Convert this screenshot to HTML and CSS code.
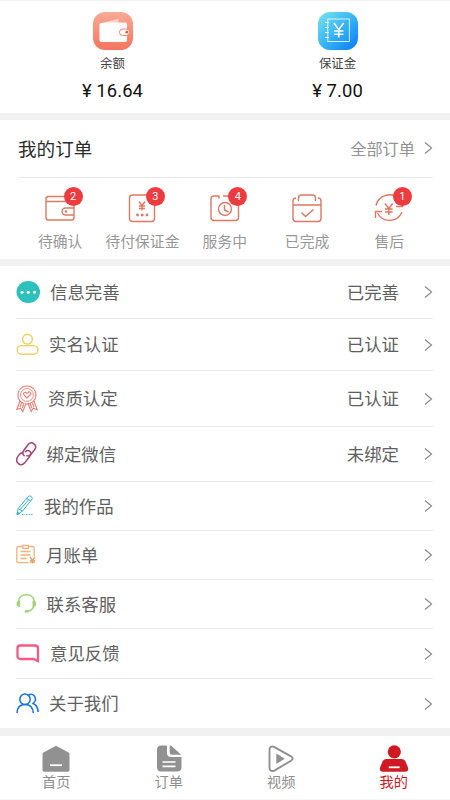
FILE: index.html
```html
<!DOCTYPE html>
<html lang="zh-CN">
<head>
<meta charset="utf-8">
<title>我的</title>
<link rel="stylesheet" href="styles.css">
</head>
<body>
<main class="page">
  <section class="wallet">
    <div class="account">
      <svg class="account-icon" width="42" height="40" viewBox="0 0 42 40">
        <defs><linearGradient id="coral" x1="0" y1="0" x2="0" y2="1"><stop offset="0" stop-color="#f8aa96"/><stop offset="1" stop-color="#f4755f"/></linearGradient></defs>
        <rect x="1" y="1" width="40" height="38" rx="12" fill="url(#coral)"/>
        <path d="M9 12.500L26.500 7.500V13" fill="#fbd0c6"/>
        <path d="M7.500 13.500Q7.500 12.300 9 12L14 11.600H33Q35 11.600 35 13.600V29Q35 31 33 31H9.500Q7.500 31 7.500 29Z" fill="#fff"/>
        <rect x="27.500" y="18" width="10" height="6.500" rx="3.200" fill="#fff" stroke="#f4806b"/>
        <circle cx="34.800" cy="21.200" r="1.400" fill="#f05340"/>
      </svg>
      <div class="account-name">余额</div>
      <div class="amount">¥ 16.64</div>
    </div>
    <div class="account">
      <svg class="account-icon" width="42" height="40" viewBox="0 0 42 40">
        <defs><linearGradient id="azure" x1="0" y1="0" x2="1" y2="1"><stop offset="0" stop-color="#7ae6ea"/><stop offset=".5" stop-color="#36b4f6"/><stop offset="1" stop-color="#0879fb"/></linearGradient></defs>
        <rect x="1" y="1" width="40" height="38" rx="12" fill="url(#azure)"/>
        <g fill="none" stroke="#e8faff"><rect x="10.800" y="8" width="21.500" height="22.500" stroke-width=".9"/><path d="M8 11.500h4M8 16.500h4M8 21.500h4M8 26.500h4" stroke-width="1.200"/><path d="M17 12l4.800 6.800L26.600 12M21.800 19v7.500M17.200 20h9.200M17.200 23.300h9.200" stroke="#fff" stroke-width="1.500"/></g>
      </svg>
      <div class="account-name">保证金</div>
      <div class="amount">¥ 7.00</div>
    </div>
  </section>

  <section class="orders">
    <header class="orders-head">
      <h2>我的订单</h2>
      <a class="all">全部订单<svg class="chevron" width="9" height="14" viewBox="0 0 9 14"><path d="M1 1.500L7.500 7L1 12.500"/></svg></a>
    </header>
    <div class="order-states">
      <div class="state">
        <div class="state-icon"><svg width="32" height="30" viewBox="0 0 32 30"><rect x="2" y="2.500" width="28" height="23.500" rx="2.500"/><path d="M2 7.500h28M30 14H21.500a3.500 3.500 0 0 0 0 7H30"/><circle class="dot" cx="22" cy="17.500" r="1.300"/></svg><b class="badge">2</b></div>
        <span>待确认</span>
      </div>
      <div class="state">
        <div class="state-icon"><svg width="32" height="30" viewBox="0 0 32 30"><rect x="3.500" y="1" width="25" height="26.500" rx="3"/><path d="M13 7.500l3 4 3-4M16 11.500v5M13 12h6M13 14.500h6"/><g class="dot"><circle cx="11.500" cy="21" r="1.400"/><circle cx="16.200" cy="21" r="1.400"/><circle cx="21" cy="21" r="1.400"/></g></svg><b class="badge">3</b></div>
        <span>待付保证金</span>
      </div>
      <div class="state">
        <div class="state-icon"><svg width="32" height="30" viewBox="0 0 32 30"><path d="M9.500 2H5Q2 2 2 5V23.500Q2 26.500 5 26.500H26.500Q29.500 26.500 29.500 23.500V5Q29.500 2 26.500 2H14M10 4.500V1.500"/><circle cx="16" cy="15" r="6.500"/><path d="M15.500 11v5l4 2"/></svg><b class="badge">4</b></div>
        <span>服务中</span>
      </div>
      <div class="state">
        <div class="state-icon"><svg width="32" height="30" viewBox="0 0 32 30"><path d="M5 4Q2 4 2 7V24.500Q2 27.500 5 27.500H27Q30 27.500 30 24.500V7Q30 4 27 4M2 11h28M7.500 7V4Q7.500 1 10.500 1H21.500Q24.500 1 24.500 4V7M10.500 18.500l4 4 8-7"/></svg></div>
        <span>已完成</span>
      </div>
      <div class="state">
        <div class="state-icon"><svg width="32" height="30" viewBox="0 0 32 30"><path d="M3 11.500A13.500 13.500 0 0 1 26 5M29 18A13.500 13.500 0 0 1 4.500 19M2.500 24v-6.500H9M23 12.500h6.500V7M12 9.500l3.800 5 3.800-5M15.800 14.500V21M12 15h7.600M12 18h7.600"/></svg><b class="badge">1</b></div>
        <span>售后</span>
      </div>
    </div>
  </section>

  <nav class="menu">
    <a class="row h53"><svg width="24" height="24" viewBox="0 0 24 24"><ellipse cx="12.300" cy="12" rx="11.800" ry="11" fill="#2cc1bd"/><g fill="#fff"><circle cx="6" cy="12.300" r="1.500"/><circle cx="12.200" cy="12.300" r="1.500"/><circle cx="18.500" cy="12.300" r="1.500"/></g></svg><span class="label l1">信息完善</span><span class="value">已完善</span><svg class="chevron" width="9" height="14" viewBox="0 0 9 14"><path d="M1 1.500L7.500 7L1 12.500"/></svg></a>
    <a class="row h52"><svg width="24" height="24" viewBox="0 0 24 24" fill="none" stroke="#f2cf63" stroke-width="1.400"><circle cx="11.500" cy="6.200" r="4.900"/><rect x="1.200" y="12.600" width="20.800" height="8.700" rx="4.300"/></svg><span class="label l2">实名认证</span><span class="value">已认证</span><svg class="chevron" width="9" height="14" viewBox="0 0 9 14"><path d="M1 1.500L7.500 7L1 12.500"/></svg></a>
    <a class="row h56"><svg width="24" height="28" viewBox="0 0 24 28" fill="none" stroke="#ef7b70" stroke-width="1.100"><circle cx="11" cy="10" r="9" stroke-dasharray="16 .8"/><circle cx="11" cy="10" r="6.400" stroke-width=".9"/><path d="M11 13L8 10Q7 8 8.800 7.300Q10.200 7 11 8.500Q12.500 6 14.200 7.200Q15.500 8.500 14 10ZM4 16L.800 24.500l4-1.300 2 3.300L10 18.700M18 16l3.200 8.500-4-1.300-2 3.300L12 18.700M5.500 18l-1.500 4M7.800 19L6.300 23M16.500 18l1.500 4M14.200 19l1.500 4"/></svg><span class="label l3">资质认定</span><span class="value">已认证</span><svg class="chevron" width="9" height="14" viewBox="0 0 9 14"><path d="M1 1.500L7.500 7L1 12.500"/></svg></a>
    <a class="row h55"><svg width="24" height="26" viewBox="0 0 24 26" fill="none" stroke="#a6437c" stroke-width="1.500" stroke-linecap="round"><path d="M8.200 14.800Q5.600 12.400 7.700 9.500L12 3.700Q14.500.200 18 2.800Q21.200 5.200 18.600 8.800L14.800 13.500Q13.200 15.300 11 14.800"/><path d="M6.600 11.800Q4.300 12 2.600 14.400Q-.800 18.700 1.600 21.700Q4.800 25.800 8.800 21.800L13.600 15.600Q16.500 11.700 13.300 9.900Q11.200 9 9.400 10.700"/></svg><span class="label l4">绑定微信</span><span class="value">未绑定</span><svg class="chevron" width="9" height="14" viewBox="0 0 9 14"><path d="M1 1.500L7.500 7L1 12.500"/></svg></a>
    <a class="row h49"><svg width="24" height="24" viewBox="0 0 24 24" fill="none" stroke="#35b8c5" stroke-width="1"><path d="M1 20.500l1.200-6L12 2.800Q13.500 1 15.200 2.500Q17.300 4.200 15.500 6L6.300 17.200Z M2.200 14.500l4.100 2.700M10.800 4.400l4 2.800M4.200 15.600l8.700-10.200"/><path d="M6 20.600h3M10 20.600h7" stroke-dasharray="1.500 1"/><path d="M1 20.500l.5-2.500 2 2Z" fill="#35b8c5"/></svg><span class="label l5">我的作品</span><svg class="chevron" width="9" height="14" viewBox="0 0 9 14"><path d="M1 1.500L7.500 7L1 12.500"/></svg></a>
    <a class="row h49"><svg width="24" height="24" viewBox="0 0 24 24" fill="none" stroke="#f3b178" stroke-width="1.300"><path d="M6 3.500H2.500Q.800 3.500.800 5.200V18Q.800 19.700 2.500 19.700H12.500M13 3.500H16.500Q18.200 3.500 18.200 5.200V13.500M6.800 2.300h5.600v3H6.800zM4.500 8.500h10M4.500 12h10M4.500 15.500h6"/><path d="M14 14l2.500 3.200L19 14M16.500 17v3.500M14 17.300h5M14 19h5" stroke="#eea063"/></svg><span class="label l6">月账单</span><svg class="chevron" width="9" height="14" viewBox="0 0 9 14"><path d="M1 1.500L7.500 7L1 12.500"/></svg></a>
    <a class="row h49"><svg width="24" height="24" viewBox="0 0 24 24" fill="none" stroke="#a0d47a" stroke-width="1.400"><path d="M2.500 9Q3.500 2.700 10.300 2.700T18.300 9M18.200 13Q17 18.800 11 19.200"/><g fill="#a0d47a" stroke="none"><path d="M4.200 8.500v6.700Q.500 15 .500 11.800T4.200 8.500M16.500 8.500v6.700Q20.200 15 20.200 11.800T16.500 8.500"/><ellipse cx="10.800" cy="19.200" rx="2.300" ry="1.500"/></g></svg><span class="label l4">联系客服</span><svg class="chevron" width="9" height="14" viewBox="0 0 9 14"><path d="M1 1.500L7.500 7L1 12.500"/></svg></a>
    <a class="row h50"><svg width="24" height="24" viewBox="0 0 24 24" fill="none" stroke="#f75b83" stroke-width="2.300"><path d="M4 3.500H19Q22 3.500 22 6.500V19.200L17.500 17H4.500Q1.500 17 1.500 14V6.500Q1.500 3.500 4 3.500Z"/></svg><span class="label l1">意见反馈</span><svg class="chevron" width="9" height="14" viewBox="0 0 9 14"><path d="M1 1.500L7.500 7L1 12.500"/></svg></a>
    <a class="row h49 last"><svg width="24" height="24" viewBox="0 0 24 24" fill="none" stroke="#1475dc" stroke-width="1.500"><circle cx="9" cy="7.300" r="5.200"/><path d="M1 21Q1.300 12.500 9 12.500T17.300 21M12.500 3.200Q15.500 1 18 3.500Q21.500 8 17 11.500Q21.700 13 22.200 20"/></svg><span class="label l2">关于我们</span><svg class="chevron" width="9" height="14" viewBox="0 0 9 14"><path d="M1 1.500L7.500 7L1 12.500"/></svg></a>
  </nav>

  <footer class="tabs">
    <a class="tab"><svg width="30" height="28" viewBox="0 0 30 28"><path d="M15 .700L27.500 7.500Q28.500 8 28.500 9V25Q28.500 26.700 27 26.700H3Q1.500 26.700 1.500 25V9Q1.500 8 2.500 7.500Z" fill="#919191"/><path d="M9 20.200h12" stroke="#fff" stroke-width="1.800"/></svg><span>首页</span></a>
    <a class="tab"><svg width="30" height="28" viewBox="0 0 30 28"><path d="M7 .500H13V8Q13 12 17 12H27.500V22Q27.500 26.500 23 26.500H7Q3 26.500 3 22V5Q3 .500 7 .500ZM15.700.500H17L27.200 9.800H18Q15.700 9.800 15.700 7.500Z" fill="#919191"/><path d="M8.500 17h13M8.500 21.300h13" stroke="#fff" stroke-width="1.700"/></svg><span>订单</span></a>
    <a class="tab"><svg width="30" height="28" viewBox="0 0 30 28"><path d="M8 1.800L25 11.400Q28.300 13.500 25 15.700L8 25.800Q3.500 27 3.500 22.500V5Q3.500.500 8 1.800Z" fill="none" stroke="#919191" stroke-width="1.900"/><path d="M10.300 8.500L18.800 13.700L10.300 18.900Z" fill="#919191"/></svg><span>视频</span></a>
    <a class="tab active"><svg width="30" height="28" viewBox="0 0 30 28"><g fill="#d01922"><circle cx="15.300" cy="6.800" r="6.600"/><path d="M7 14H23Q25.500 14 26.500 16.500L28.800 22Q30.300 26.700 26 26.700H4Q-.300 26.700 1.200 22L3.500 16.500Q4.500 14 7 14Z"/></g><path d="M9.700 22.300h11" stroke="#fff" stroke-width="1.800"/></svg><span>我的</span></a>
  </footer>
</main>
</body>
</html>
```
FILE: styles.css
```css
* { box-sizing: border-box; }
body {
  margin: 0;
  background: #fff;
  color: #606060;
  font-family: Roboto, "Noto Sans CJK SC", sans-serif;
}
svg { display: block; flex: none; }
.page { width: 450px; height: 800px; display: flex; flex-direction: column; overflow: hidden; }
.wallet {
  height: 120px;
  display: grid;
  grid-template-columns: 1fr 1fr;
  border-top: 1px solid #f2f2f2;
  border-bottom: 7px solid #f2f2f2;
}
.account { display: flex; flex-direction: column; align-items: center; padding-top: 10px; }
.account-name { margin-top: 3px; font-size: 12.4px; line-height: 20px; color: #444; }
.amount { margin-top: 5px; font-size: 18.4px; line-height: 24px; letter-spacing: .1px; color: #111; white-space: nowrap; }

.orders { height: 146px; border-bottom: 7px solid #f2f2f2; }
.orders-head {
  height: 58px;
  margin: 0 17px 0 18px;
  display: flex;
  align-items: center;
  justify-content: space-between;
  border-bottom: 1px solid #ebebeb;
}
.orders-head h2 { margin: -2px 0 0; font-size: 18.6px; font-weight: 400; color: #2b2b2b; }
.all { display: flex; align-items: center; gap: 9px; margin-top: -2px; font-size: 16.2px; color: #939393; }
.chevron { fill: none; stroke: #8c8c8c; stroke-width: 1.2; }
.order-states {
  display: grid;
  grid-template-columns: repeat(5, 82.3px);
  margin-left: 19px;
  padding-top: 16px;
}
.state { display: flex; flex-direction: column; align-items: center; font-size: 14.8px; line-height: 22px; color: #979797; white-space: nowrap; }
.state-icon { position: relative; height: 37px; }
.state-icon svg { fill: none; stroke: #e07862; stroke-width: 1.4; }
.state-icon svg .dot { fill: #e07862; stroke: none; }
.badge {
  position: absolute;
  left: 19.500px;
  top: -7px;
  width: 19px;
  height: 19px;
  border-radius: 50%;
  background: #ed3b40;
  color: #fff;
  font-size: 11px;
  font-weight: 400;
  line-height: 19px;
  text-align: center;
}

.menu { height: 470px; border-bottom: 8px solid #f1f1f1; }
.row {
  margin: 0 17px 0 16px;
  display: flex;
  align-items: center;
  border-bottom: 1px solid #ebebeb;
  font-size: 17.4px;
  line-height: 24px;
}
.row.last { border-bottom: 0; }
.h49 { height: 49px; }
.h50 { height: 50px; }
.h52 { height: 52px; }
.h53 { height: 53px; }
.h56 { height: 56px; }
.h55 { height: 55px; }
.label { flex: 1; padding-top: 1px; }
.l1 { margin-left: 10px; }
.l2 { margin-left: 9px; }
.l3 { margin-left: 8px; }
.l4 { margin-left: 6.500px; }
.l5 { margin-left: 4px; }
.l6 { margin-left: 6px; }
.value { margin-right: 25px; padding-top: 1px; }

.tabs {
  height: 64px;
  display: grid;
  grid-template-columns: repeat(4, 1fr);
  padding-top: 9px;
  border-bottom: 1px solid #f7f7f7;
}
.tab { display: flex; flex-direction: column; align-items: center; font-size: 14.2px; line-height: 19px; color: #8e8e8e; }
.active { color: #d01922; }
```
